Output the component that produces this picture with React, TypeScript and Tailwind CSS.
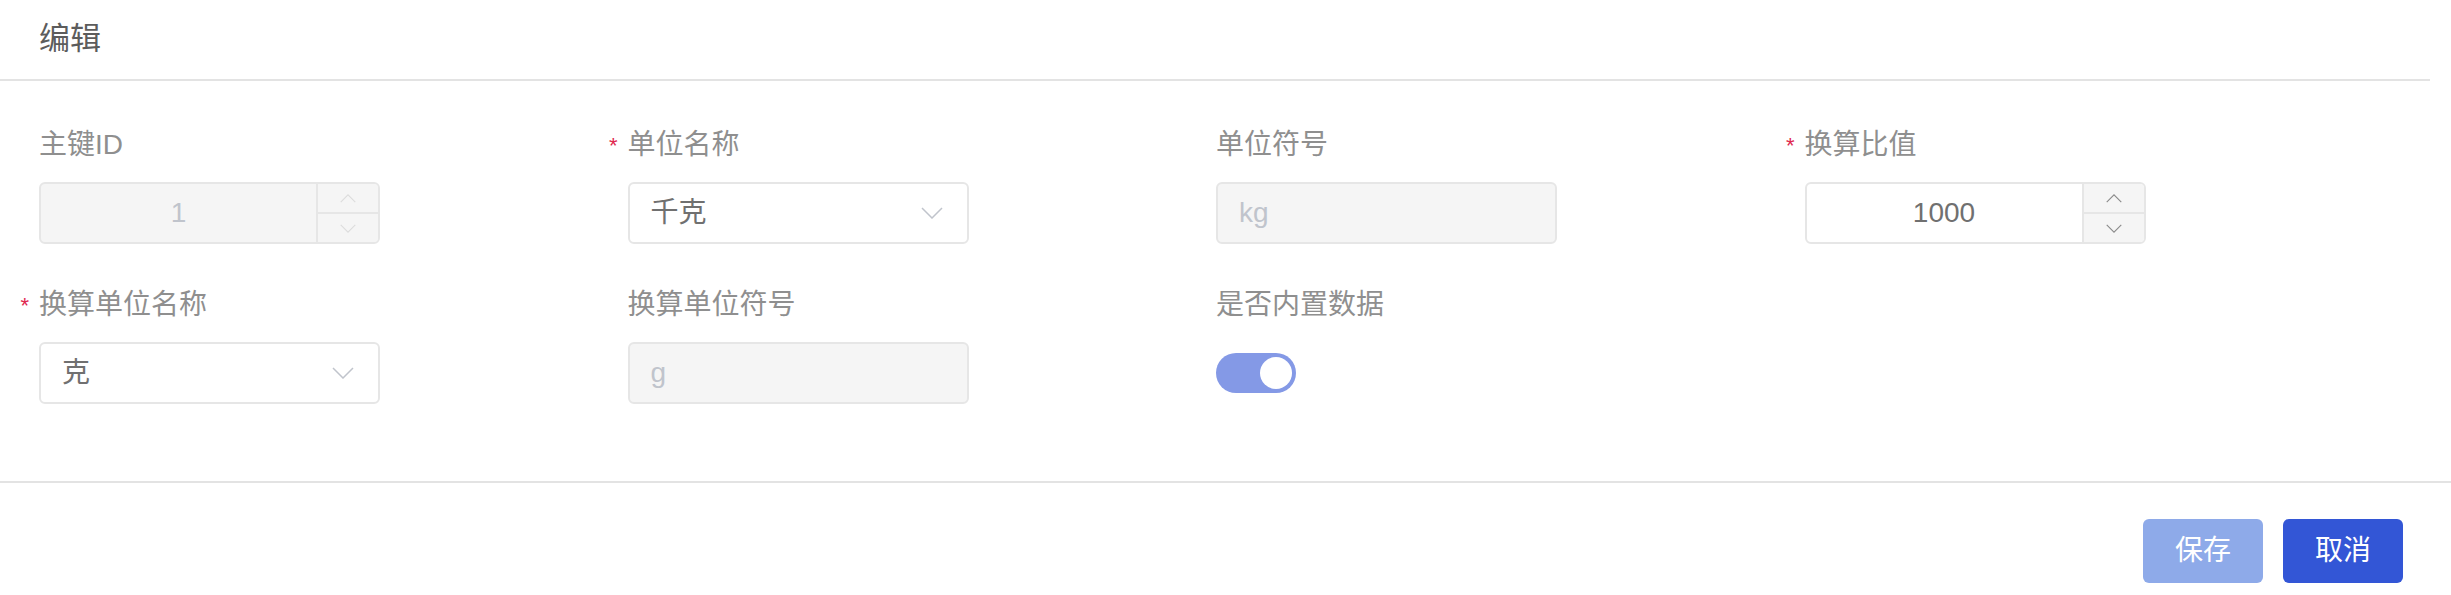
import React from "react";

const font = { fontFamily: '"Liberation Sans", "Noto Sans CJK SC", sans-serif' };

function Label({ text, required }: { text: string; required?: boolean }) {
  return (
    <div className="h-[40px] leading-[40px] text-[28px] text-[#8f8f8f]">
      <span className="relative">
        {required && (
          <span className="absolute right-full mr-[10px] top-[-3px] text-[22px] text-[#e0284f]">*</span>
        )}
        {text}
      </span>
    </div>
  );
}

function Chevron({ up, color, small }: { up?: boolean; color: string; small?: boolean }) {
  const w = small ? 16 : 22;
  const h = small ? 9 : 12;
  return (
    <svg width={w} height={h} viewBox="0 0 22 12" fill="none">
      <path
        d={up ? "M1 11 L11 1 L21 11" : "M1 1 L11 11 L21 1"}
        stroke={color}
        strokeWidth="1.5"
      />
    </svg>
  );
}

function NumberInput({ value, disabled }: { value: string; disabled?: boolean }) {
  const arrow = disabled ? "#dcdcdc" : "#8a8a8a";
  return (
    <div
      className={`flex w-[341px] h-[62px] rounded-[6px] border-2 border-[#e6e6e6] overflow-hidden ${
        disabled ? "bg-[#f5f5f5]" : "bg-white"
      }`}
    >
      <div
        className={`flex-1 flex items-center justify-center text-[28px] ${
          disabled ? "text-[#c0c4cc]" : "text-[#707070]"
        }`}
      >
        {value}
      </div>
      <div className="w-[62px] flex flex-col border-l-2 border-[#e6e6e6] bg-[#f5f5f5]">
        <div className="flex-1 flex items-center justify-center border-b-2 border-[#e6e6e6]">
          <Chevron up small color={arrow} />
        </div>
        <div className="flex-1 flex items-center justify-center">
          <Chevron small color={arrow} />
        </div>
      </div>
    </div>
  );
}

function Select({ value }: { value: string }) {
  return (
    <div className="flex items-center justify-between w-[341px] h-[62px] rounded-[6px] border-2 border-[#e6e6e6] bg-white pl-[21px] pr-[24px] text-[28px] text-[#707070]">
      <span>{value}</span>
      <Chevron color="#c0c4cc" />
    </div>
  );
}

function DisabledInput({ value }: { value: string }) {
  return (
    <div className="flex items-center w-[341px] h-[62px] rounded-[6px] border-2 border-[#e6e6e6] bg-[#f5f5f5] pl-[21px] text-[28px] text-[#c0c4cc]">
      {value}
    </div>
  );
}

function Switch() {
  return (
    <div className="h-[62px] flex items-center">
      <div className="w-[80px] h-[40px] rounded-full bg-[#8499e6] flex items-center justify-end pr-[4px]">
        <div className="w-[32px] h-[32px] rounded-full bg-white" />
      </div>
    </div>
  );
}

function Field({ label, required, children }: { label: string; required?: boolean; children: React.ReactNode }) {
  return (
    <div className="flex flex-col gap-[17px]">
      <Label text={label} required={required} />
      {children}
    </div>
  );
}

export default function App() {
  return (
    <div className="w-[2451px] h-[595px] bg-white overflow-hidden" style={font}>
      {/* Header */}
      <div className="mr-[21px] h-[81px] border-b-2 border-[#e3e3e3] flex items-center pl-[39px]">
        <span className="text-[31px] text-[#5c5c5c]">编辑</span>
      </div>

      {/* Form */}
      <div className="grid grid-cols-4 gap-y-[41px] pl-[39px] pr-[58px] pt-[44px] pb-[77px]">
        <Field label="主键ID">
          <NumberInput value="1" disabled />
        </Field>
        <Field label="单位名称" required>
          <Select value="千克" />
        </Field>
        <Field label="单位符号">
          <DisabledInput value="kg" />
        </Field>
        <Field label="换算比值" required>
          <NumberInput value="1000" />
        </Field>
        <Field label="换算单位名称" required>
          <Select value="克" />
        </Field>
        <Field label="换算单位符号">
          <DisabledInput value="g" />
        </Field>
        <Field label="是否内置数据">
          <Switch />
        </Field>
      </div>

      {/* Footer */}
      <div className="border-t-2 border-[#e3e3e3] flex justify-end gap-[20px] pt-[36px] pr-[48px]">
        <button className="w-[120px] h-[64px] rounded-[6px] bg-[#8eaae9] text-white text-[28px]">保存</button>
        <button className="w-[120px] h-[64px] rounded-[6px] bg-[#3356d6] text-white text-[28px]">取消</button>
      </div>
    </div>
  );
}
